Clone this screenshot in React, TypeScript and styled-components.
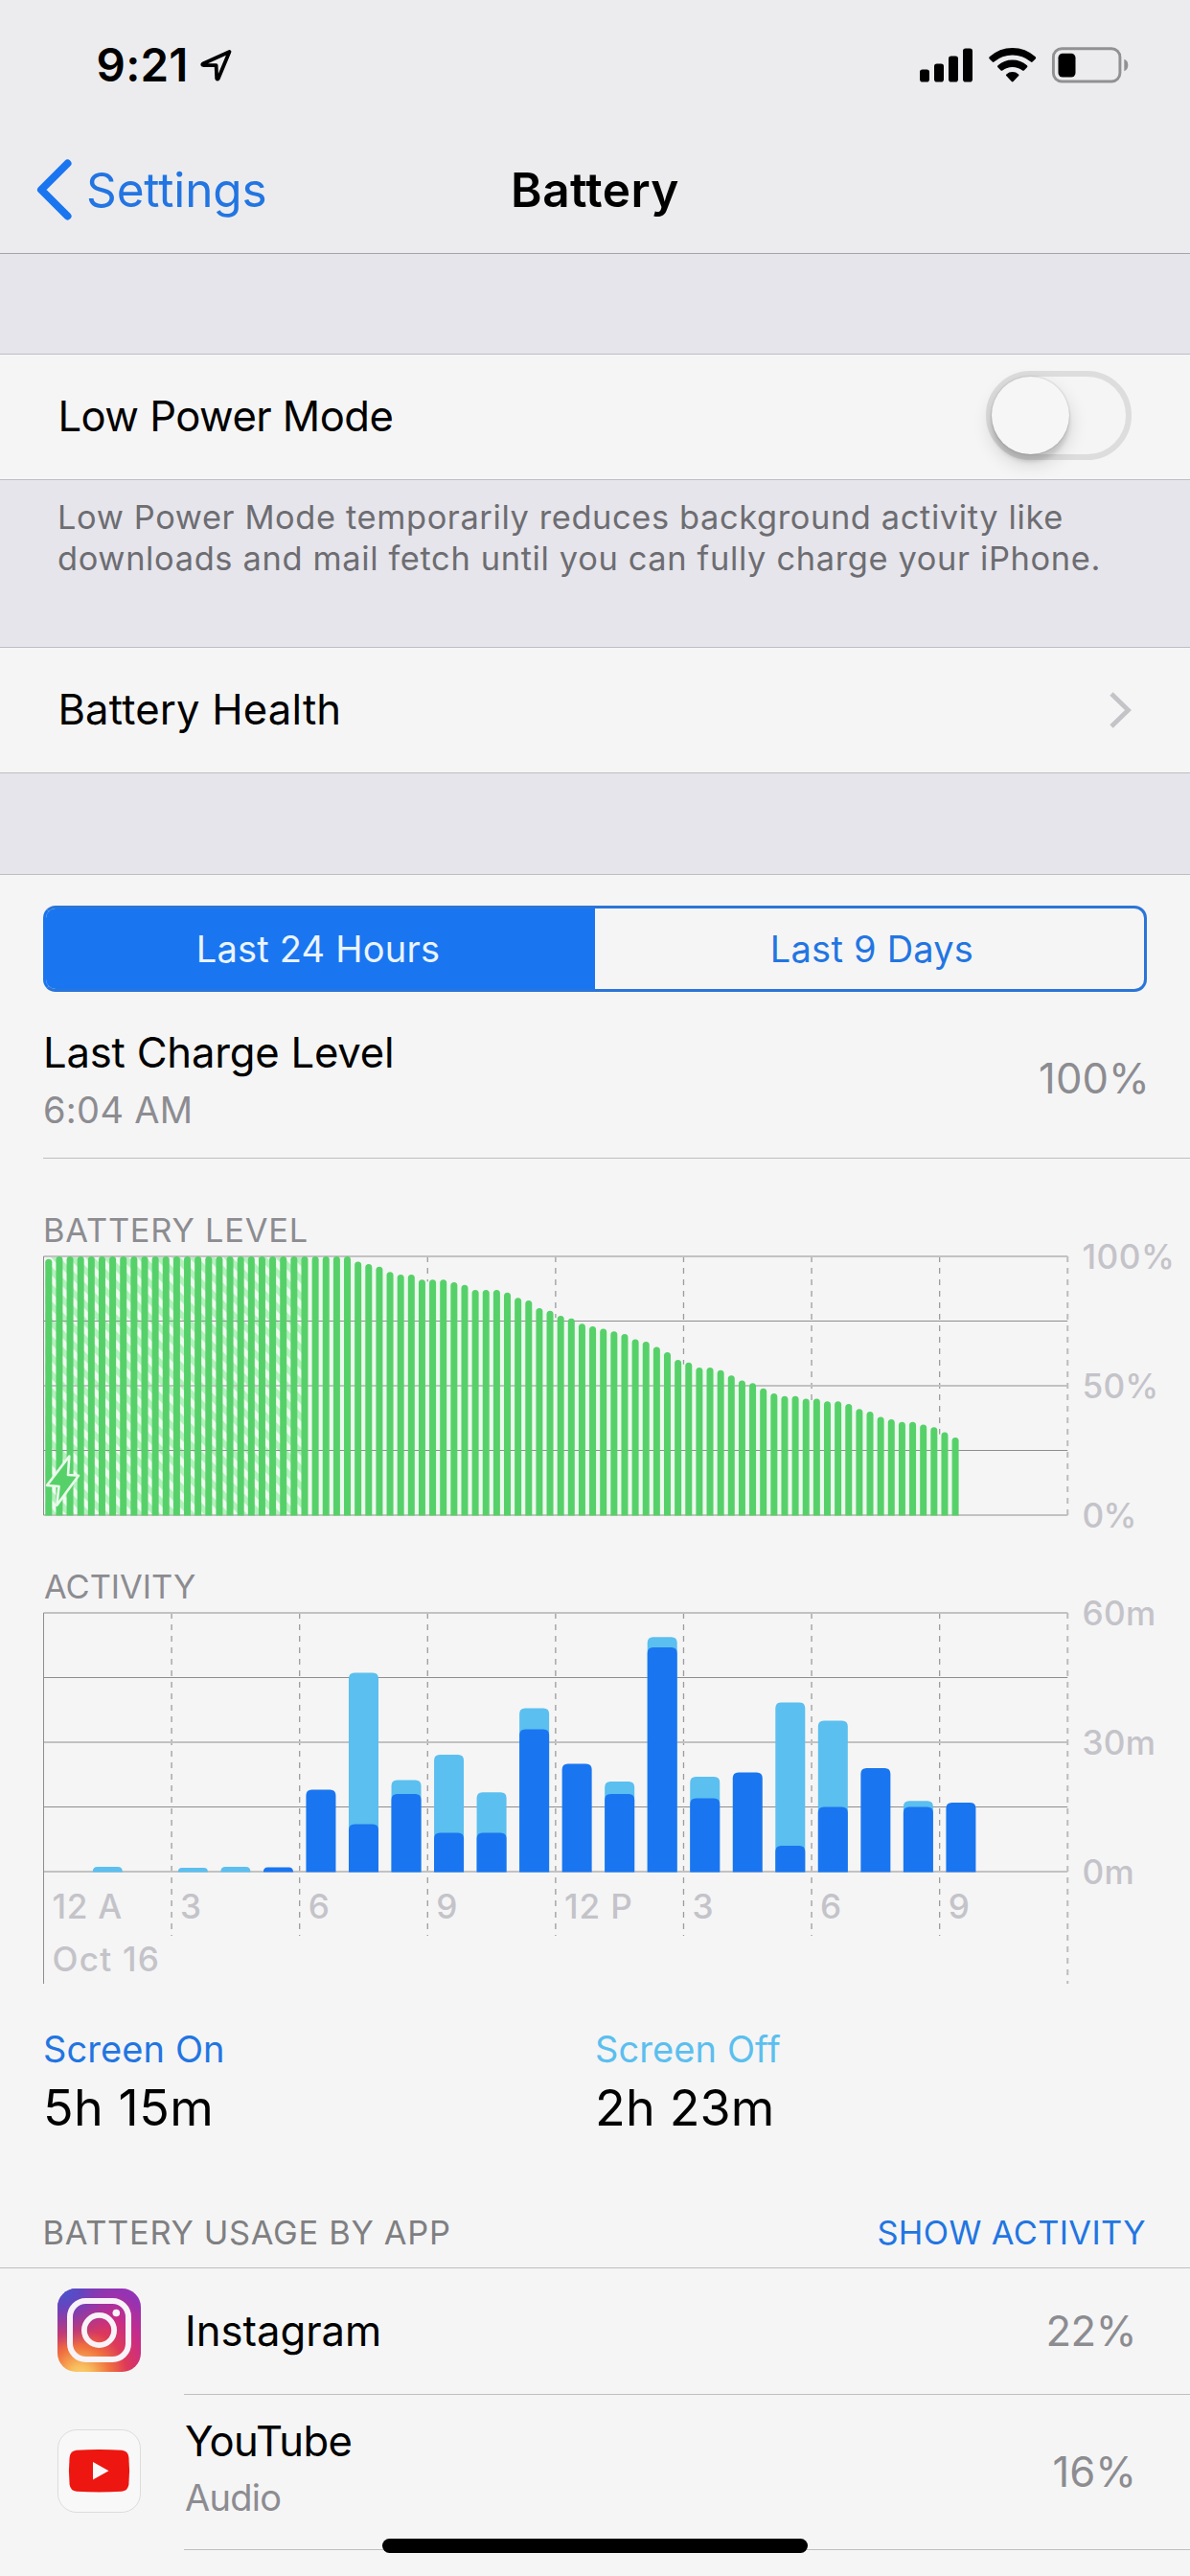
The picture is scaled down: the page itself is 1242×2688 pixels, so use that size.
import React from "react";
import styled, { createGlobalStyle } from "styled-components";

const BLUE = "#1a75f0";
const SKY = "#5bbfef";
const GREEN = "#56d169";
const GRAY = "#8c8c91";
const AXIS = "#c4c3c9";
const HAIRLINE = "#bebdc2";
const FONT = `Inter, Roboto, "Liberation Sans", sans-serif`;

const GlobalStyle = createGlobalStyle`
  * { box-sizing: border-box; }
  html, body { margin: 0; padding: 0; background: #f5f5f5; }
  body { font-family: ${FONT}; color: #000; }
`;

const Screen = styled.main`
  position: relative;
  display: flex;
  flex-direction: column;
  width: 1242px;
  height: 2688px;
  overflow: hidden;
  background: #f5f5f5;
`;

const Text = styled.span<{ $size: number; $line?: number; $track?: number; $color?: string; $weight?: number }>`
  display: block;
  white-space: nowrap;
  font-size: ${(p) => p.$size}px;
  line-height: ${(p) => p.$line ?? 60}px;
  letter-spacing: ${(p) => p.$track ?? 0}px;
  color: ${(p) => p.$color ?? "#000"};
  font-weight: ${(p) => p.$weight ?? 400};
`;

const Header = styled.header`
  height: 265px;
  flex: none;
  background: #ececee;
  border-bottom: 1px solid #a4a4aa;
`;

const StatusBar = styled.div`
  display: flex;
  align-items: center;
  height: 132px;
  padding: 3px 64px 0 100.6px;
`;

const LocationArrow = styled.svg`
  margin-left: 11px;
`;

const StatusIcons = styled.svg`
  margin-left: auto;
`;

const NavBar = styled.nav`
  display: grid;
  grid-template-columns: 1fr auto 1fr;
  align-items: center;
  height: 132px;
`;

const BackButton = styled.div`
  display: flex;
  align-items: center;
  gap: 14px;
  padding-left: 38px;
`;

const Gap = styled.div<{ $height: number }>`
  flex: none;
  height: ${(p) => p.$height}px;
  background: #e6e5eb;
`;

const Cell = styled.section`
  display: flex;
  flex: none;
  align-items: center;
  justify-content: space-between;
  height: 132px;
  padding: 0 61px 0 60.4px;
  border-top: 1px solid ${HAIRLINE};
  border-bottom: 1px solid ${HAIRLINE};
`;

const Footnote = styled.div`
  flex: none;
  height: 174px;
  padding: 18px 0 0 60px;
  background: #e6e5eb;
`;

const Toggle = styled.div`
  width: 152px;
  height: 93px;
  margin-bottom: 3px;
  border: 6px solid #dddddd;
  border-radius: 47px;
`;

const Knob = styled.div`
  width: 81px;
  height: 81px;
  border-radius: 50%;
  background: #f6f6f6;
  box-shadow: 0 9px 20px rgba(0, 0, 0, 0.16), 0 8px 4px rgba(0, 0, 0, 0.11), 0 0 2px rgba(0, 0, 0, 0.25);
`;

const Panel = styled.section`
  display: flex;
  flex-direction: column;
  border-top: 1px solid ${HAIRLINE};
  padding-top: 32px;
`;

const Segmented = styled.div`
  display: grid;
  grid-template-columns: 1fr 1fr;
  height: 90px;
  margin: 0 45px;
  border: 3px solid #2a75d8;
  border-left-color: ${BLUE};
  border-radius: 13px;
  overflow: hidden;
`;

const Segment = styled.div<{ $active?: boolean }>`
  display: flex;
  align-items: center;
  justify-content: center;
  padding: ${(p) => (p.$active ? "0 5px 0 0" : "0 0 0 5px")};
  background: ${(p) => (p.$active ? BLUE : "transparent")};
`;

const ChargeRow = styled.div`
  display: flex;
  align-items: center;
  justify-content: space-between;
  height: 174px;
  margin-left: 45px;
  padding: 8px 42px 0 0;
  border-bottom: 1px solid ${HAIRLINE};
`;

const Stack = styled.div<{ $gap: number; $lift?: number }>`
  display: flex;
  flex-direction: column;
  gap: ${(p) => p.$gap}px;
  padding-bottom: ${(p) => p.$lift ?? 0}px;
`;

const ChartBlock = styled.figure<{ $top: number }>`
  display: flex;
  flex-direction: column;
  margin: ${(p) => p.$top}px 0 0;
`;

const ChartTitle = styled.figcaption<{ $inset: number }>`
  padding-left: ${(p) => p.$inset}px;
`;

const ChartSvg = styled.svg`
  display: block;
  overflow: visible;
  font-family: ${FONT};
`;

const AxisText = styled.text<{ $track: number }>`
  fill: ${AXIS};
  font-size: 35.2px;
  font-weight: 500;
  letter-spacing: ${(p) => p.$track}px;
`;

const Totals = styled.div`
  display: grid;
  grid-template-columns: 576px 576px;
  margin: 41px 45px 0;
`;

const UsageHeader = styled.div`
  display: flex;
  align-items: flex-end;
  justify-content: space-between;
  height: 137px;
  padding: 0 46px 16px 44.5px;
  border-bottom: 1px solid ${HAIRLINE};
`;

const AppRow = styled.div<{ $height: number }>`
  display: flex;
  align-items: center;
  gap: 45px;
  height: ${(p) => p.$height}px;
  padding-left: 60px;
`;

const AppIcon = styled.svg`
  display: block;
  flex: none;
  margin-bottom: 3px;
`;

const AppBody = styled.div`
  display: flex;
  flex: 1;
  align-items: center;
  justify-content: space-between;
  align-self: stretch;
  padding: 0 56px 0 1px;
  border-bottom: 1px solid ${HAIRLINE};
`;

const HomeIndicator = styled.div`
  position: absolute;
  left: 399px;
  top: 2649px;
  width: 444px;
  height: 15px;
  border-radius: 8px;
  background: #000;
`;

const PLOT_X = 45.5;
const PLOT_Y = 7;
const PLOT_W = 1068.75;
const PLOT_H = 270;
const HOUR = PLOT_W / 24;

// One sample per quarter hour, starting at midnight.
const batteryLevels: number[] = [
  99, ...Array<number>(28).fill(100), 98, 97, 96, 94, 93, 93, 91, 91, 91, 90, 89, 87, 87, 87, 86, 84, 83, 80, 79, 77,
  76, 74, 73, 72, 71, 70, 68, 67, 65, 63, 60, 59, 57, 57, 56, 54, 52, 51, 49, 47, 46, 46, 45, 45, 44, 44, 43, 41, 40,
  38, 37, 36, 36, 35, 34, 32, 30,
];

const CHARGING_SAMPLES = 25;

const activity: { hour: number; total: number; on: number }[] = [
  { hour: 1, total: 1.1, on: 0 },
  { hour: 3, total: 0.9, on: 0 },
  { hour: 4, total: 1.1, on: 0 },
  { hour: 5, total: 1, on: 1 },
  { hour: 6, total: 19, on: 19 },
  { hour: 7, total: 46.1, on: 11 },
  { hour: 8, total: 21.2, on: 18 },
  { hour: 9, total: 27.1, on: 9 },
  { hour: 10, total: 18.4, on: 9 },
  { hour: 11, total: 37.9, on: 33 },
  { hour: 12, total: 25, on: 25 },
  { hour: 13, total: 20.9, on: 18 },
  { hour: 14, total: 54.4, on: 52 },
  { hour: 15, total: 22, on: 17 },
  { hour: 16, total: 23, on: 23 },
  { hour: 17, total: 39.2, on: 6 },
  { hour: 18, total: 35, on: 15 },
  { hour: 19, total: 24, on: 24 },
  { hour: 20, total: 16.4, on: 15 },
  { hour: 21, total: 16, on: 16 },
];

const hourLabels = [
  { label: "12 A", track: 0.7 },
  { label: "3", track: 0 },
  { label: "6", track: 0 },
  { label: "9", track: 0 },
  { label: "12 P", track: 0.9 },
  { label: "3", track: 0 },
  { label: "6", track: 0 },
  { label: "9", track: 0 },
];

function roundedTop(x: number, width: number, height: number, radius: number) {
  const r = Math.min(radius, height);
  const top = PLOT_Y + PLOT_H - height;
  const bottom = PLOT_Y + PLOT_H + 0.5;
  return `M${x} ${bottom}V${top + r}Q${x} ${top} ${x + r} ${top}H${x + width - r}Q${x + width} ${top} ${x + width} ${top + r}V${bottom}Z`;
}

function HourLines({ dashEnd, edgeEnd }: { dashEnd: number; edgeEnd: number }) {
  return (
    <g>
      {[1, 2, 3, 4, 5, 6, 7, 8].map((i) => {
        const x = PLOT_X + i * 3 * HOUR;
        const last = i === 8;
        return (
          <line
            key={i}
            x1={x}
            x2={x}
            y1={PLOT_Y}
            y2={last ? edgeEnd : dashEnd}
            stroke={last ? "#bcbcbc" : "#9c9c9e"}
            strokeWidth={last ? 2 : 1.3}
            strokeDasharray="6 6"
          />
        );
      })}
    </g>
  );
}

function LevelLines({ edgeEnd }: { edgeEnd: number }) {
  return (
    <g>
      {[0, 1, 2, 3, 4].map((i) => {
        const heavy = i % 2 === 0;
        const y = PLOT_Y + (i * PLOT_H) / 4;
        return (
          <line
            key={i}
            x1={PLOT_X}
            x2={PLOT_X + PLOT_W}
            y1={y}
            y2={y}
            stroke={heavy ? "#c2c2c2" : "#8e8e90"}
            strokeWidth={heavy ? 2 : 1}
          />
        );
      })}
      <line x1={PLOT_X} x2={PLOT_X} y1={PLOT_Y} y2={edgeEnd} stroke="#8e8e90" strokeWidth={1} />
    </g>
  );
}

function AxisLabels({ labels }: { labels: [string, number][] }) {
  return (
    <>
      {labels.map(([label, track], i) => (
        <AxisText key={label} x={1129.5} y={PLOT_Y + 12.5 + i * 135} $track={track}>
          {label}
        </AxisText>
      ))}
    </>
  );
}

function BatteryChart() {
  const pitch = HOUR / 4;
  return (
    <ChartSvg width="1242" height="332" viewBox="0 0 1242 332">
      <defs>
        <pattern id="hatch" width="18" height="18" patternUnits="userSpaceOnUse">
          <rect width="18" height="18" fill="#b6efbf" />
          <path d="M-2 -11L20 11V20L-2 -2ZM-2 7L20 29V38L-2 16Z" fill="#f0faf1" />
        </pattern>
      </defs>
      <HourLines dashEnd={PLOT_Y + PLOT_H} edgeEnd={PLOT_Y + PLOT_H} />
      <rect
        x={PLOT_X + 2}
        y={PLOT_Y}
        width={CHARGING_SAMPLES * pitch - 5}
        height={PLOT_H}
        fill="url(#hatch)"
      />
      {batteryLevels.slice(CHARGING_SAMPLES).map((level, i) => (
        <rect
          key={i}
          x={PLOT_X + 2 + (i + CHARGING_SAMPLES - 1) * pitch + 6}
          y={PLOT_Y + PLOT_H * (1 - level / 100) + 2}
          width={pitch - 5}
          height={(PLOT_H * level) / 100 - 2}
          fill="#edf8ee"
        />
      ))}
      <LevelLines edgeEnd={PLOT_Y + PLOT_H} />
      {batteryLevels.map((level, i) => (
        <path key={i} d={roundedTop(PLOT_X + 1.8 + i * pitch, 7, (PLOT_H * level) / 100, 3.5)} fill={GREEN} />
      ))}
      <path
        d="M72.3 215.5L71 235L82 235.7L59.3 266.7L61.5 247L49 246Z"
        fill={GREEN}
        stroke="#eafaec"
        strokeWidth="2.6"
        strokeLinejoin="round"
      />
      <AxisLabels
        labels={[
          ["100%", 0.5],
          ["50%", 0.2],
          ["0%", -0.8],
        ]}
      />
    </ChartSvg>
  );
}

function ActivityChart() {
  return (
    <ChartSvg width="1242" height="399" viewBox="0 0 1242 399">
      <HourLines dashEnd={344} edgeEnd={394} />
      <LevelLines edgeEnd={394} />
      {activity.map(({ hour, total, on }) => {
        const x = PLOT_X + (hour + 0.5) * HOUR - 15.5;
        return (
          <g key={hour}>
            {total > on && <path d={roundedTop(x, 31, (PLOT_H * total) / 60, 6)} fill={SKY} />}
            {on > 0 && <path d={roundedTop(x, 31, (PLOT_H * on) / 60, 6)} fill={BLUE} />}
          </g>
        );
      })}
      {hourLabels.map(({ label, track }, i) => (
        <AxisText key={i} x={54.5 + i * 3 * HOUR} y={326} $track={track}>
          {label}
        </AxisText>
      ))}
      <AxisText x={54.5} y={381} $track={1.2}>
        Oct 16
      </AxisText>
      <AxisLabels
        labels={[
          ["60m", 0.3],
          ["30m", 0.3],
          ["0m", 0.3],
        ]}
      />
    </ChartSvg>
  );
}

function InstagramIcon() {
  return (
    <AppIcon width="87" height="87" viewBox="0 0 87 87">
      <defs>
        <radialGradient id="ig-warm" gradientUnits="userSpaceOnUse" cx="24" cy="92" r="98">
          <stop offset="0" stopColor="#fbd27a" />
          <stop offset="0.12" stopColor="#f8bd5c" />
          <stop offset="0.32" stopColor="#f0713f" />
          <stop offset="0.5" stopColor="#de3a58" />
          <stop offset="0.72" stopColor="#c92c86" />
          <stop offset="1" stopColor="#9433b4" />
        </radialGradient>
        <radialGradient id="ig-cool" gradientUnits="userSpaceOnUse" cx="6" cy="0" r="62">
          <stop offset="0" stopColor="#4558cf" />
          <stop offset="0.3" stopColor="#5a48c4" stopOpacity="0.9" />
          <stop offset="1" stopColor="#8c35b4" stopOpacity="0" />
        </radialGradient>
      </defs>
      <rect width="87" height="87" rx="19.5" fill="url(#ig-warm)" />
      <rect width="87" height="87" rx="19.5" fill="url(#ig-cool)" />
      <g fill="none" stroke="#f8f3f8">
        <rect x="13" y="13" width="61" height="61" rx="16.5" strokeWidth="6" />
        <circle cx="43.5" cy="43.5" r="15.6" strokeWidth="5.8" />
      </g>
      <circle cx="61.3" cy="25.5" r="3.8" fill="#f8f3f8" />
    </AppIcon>
  );
}

function YouTubeIcon() {
  return (
    <AppIcon width="87" height="87" viewBox="0 0 87 87">
      <rect x="0.5" y="0.5" width="86" height="86" rx="19.5" fill="#f8f8f8" stroke="#dcdcdd" />
      <path
        d="M12.6 29Q13.5 22.3 20 21.8Q43.5 20.2 67 21.8Q73.5 22.3 74.4 29Q75.8 43.5 74.4 57.5Q73.5 64.2 67 64.8Q43.5 66.4 20 64.8Q13.5 64.2 12.6 57.5Q11.2 43.5 12.6 29Z"
        fill="#ee1610"
      />
      <path d="M37 34L53.5 43.3L37 52.6Z" fill="#f8f8f8" />
    </AppIcon>
  );
}

export default function App() {
  return (
    <Screen>
      <GlobalStyle />
      <Header>
        <StatusBar>
          <Text $size={47.5} $track={0.2} $weight={600}>
            9:21
          </Text>
          <LocationArrow width="36" height="36" viewBox="0 0 36 36">
            <path
              d="M31.5 4L3.8 16.5Q2.5 17.6 4.2 18L17.6 18.2L18.2 31.8Q18.8 33.5 19.8 32Z"
              fill="none"
              stroke="#000"
              strokeWidth="3.8"
              strokeLinejoin="round"
            />
          </LocationArrow>
          <StatusIcons width="218" height="38" viewBox="0 0 218 38">
            <rect x="0" y="23.5" width="10" height="13" rx="2.8" />
            <rect x="15" y="17.5" width="10" height="19" rx="2.8" />
            <rect x="30" y="9.5" width="10" height="27" rx="2.8" />
            <rect x="45" y="1.5" width="10" height="35" rx="2.8" />
            <path d="M72.7 12.5Q71.6 11.3 72.7 10.2Q83 0.9 96.7 0.9T120.7 10.2Q121.8 11.3 120.7 12.5L117.6 15.6Q116.8 16.4 115.9 15.6Q107.5 8.6 96.7 8.6T77.5 15.6Q76.6 16.4 75.8 15.6Z" />
            <path d="M81.4 21.2Q80.4 20.2 81.5 19.2Q88 13.6 96.7 13.6T111.9 19.2Q113 20.2 112 21.2L108.8 24.5Q108 25.2 107.1 24.5Q102.6 20.9 96.7 20.9T86.3 24.5Q85.4 25.2 84.6 24.5Z" />
            <path d="M90.2 30.1Q89.4 29.2 90.4 28.4Q93 26.1 96.7 26.1T103 28.4Q104 29.2 103.2 30.1L97.6 36Q96.7 36.9 95.8 36Z" />
            <rect x="139.4" y="1.7" width="69.5" height="34.3" rx="8.8" fill="none" stroke="#919193" strokeWidth="2.9" />
            <rect x="144.5" y="6.7" width="18" height="24.8" rx="4.6" />
            <path d="M213.3 12.8Q217.3 14.2 217.3 19T213.3 25.2Z" fill="#919193" />
          </StatusIcons>
        </StatusBar>
        <NavBar>
          <BackButton>
            <svg width="38" height="66" viewBox="0 0 38 66">
              <path
                d="M32.5 5.5L5 33L32.5 60.5"
                fill="none"
                stroke={BLUE}
                strokeWidth="8"
                strokeLinecap="round"
                strokeLinejoin="round"
              />
            </svg>
            <Text $size={49.5} $track={-0.13} $color="#2275e2">
              Settings
            </Text>
          </BackButton>
          <Text $size={49.5} $track={0.44} $weight={600}>
            Battery
          </Text>
        </NavBar>
      </Header>

      <Gap $height={104} />
      <Cell>
        <Text $size={43.6} $track={-0.54}>
          Low Power Mode
        </Text>
        <Toggle>
          <Knob />
        </Toggle>
      </Cell>
      <Footnote>
        <Text $size={34.4} $line={42.5} $track={0.62} $color="#6d6d72">
          Low Power Mode temporarily reduces background activity like
        </Text>
        <Text $size={34.4} $line={42.5} $track={0.65} $color="#6d6d72">
          downloads and mail fetch until you can fully charge your iPhone.
        </Text>
      </Footnote>
      <Cell>
        <Text $size={43.6} $track={0.19}>
          Battery Health
        </Text>
        <svg width="24" height="38" viewBox="0 0 24 38">
          <path d="M3 2L20.5 19L3 36" fill="none" stroke="#c3c3c8" strokeWidth="4.8" />
        </svg>
      </Cell>
      <Gap $height={105} />

      <Panel>
        <Segmented>
          <Segment $active>
            <Text $size={38} $track={0.22} $color="#e9f4ff">
              Last 24 Hours
            </Text>
          </Segment>
          <Segment>
            <Text $size={38} $track={0.22} $color="#2275e2">
              Last 9 Days
            </Text>
          </Segment>
        </Segmented>

        <ChargeRow>
          <Stack $gap={4}>
            <Text $size={43.6} $track={-0.2}>
              Last Charge Level
            </Text>
            <Text $size={38} $line={50} $track={0.3} $color={GRAY}>
              6:04 AM
            </Text>
          </Stack>
          <Text $size={43.6} $track={0.1} $color={GRAY}>
            100%
          </Text>
        </ChargeRow>

        <ChartBlock $top={55}>
          <ChartTitle $inset={45}>
            <Text $size={34.4} $line={40} $track={0.79} $color={GRAY}>
              BATTERY LEVEL
            </Text>
          </ChartTitle>
          <BatteryChart />
        </ChartBlock>

        <ChartBlock $top={0}>
          <ChartTitle $inset={46}>
            <Text $size={34.4} $line={40} $track={0} $color={GRAY}>
              ACTIVITY
            </Text>
          </ChartTitle>
          <ActivityChart />
        </ChartBlock>

        <Totals>
          <Stack $gap={10}>
            <Text $size={38} $line={44} $track={0.1} $color="#2275e2">
              Screen On
            </Text>
            <Text $size={52} $track={0.5}>
              5h 15m
            </Text>
          </Stack>
          <Stack $gap={10}>
            <Text $size={38} $line={44} $track={0.1} $color={SKY}>
              Screen Off
            </Text>
            <Text $size={52} $track={0.18}>
              2h 23m
            </Text>
          </Stack>
        </Totals>

        <UsageHeader>
          <Text $size={34.4} $line={40} $track={0.7} $color="#7f7f82">
            BATTERY USAGE BY APP
          </Text>
          <Text $size={34.4} $line={40} $track={0.37} $color="#2275e2">
            SHOW ACTIVITY
          </Text>
        </UsageHeader>

        <AppRow $height={132}>
          <InstagramIcon />
          <AppBody>
            <Text $size={43.6}>Instagram</Text>
            <Text $size={43.6} $track={-0.5} $color={GRAY}>
              22%
            </Text>
          </AppBody>
        </AppRow>
        <AppRow $height={162}>
          <YouTubeIcon />
          <AppBody>
            <Stack $gap={5} $lift={8}>
              <Text $size={43.6} $line={56} $track={-0.65}>
                YouTube
              </Text>
              <Text $size={38} $line={50} $track={-0.71} $color={GRAY}>
                Audio
              </Text>
            </Stack>
            <Text $size={43.6} $track={0} $color={GRAY}>
              16%
            </Text>
          </AppBody>
        </AppRow>
      </Panel>

      <HomeIndicator />
    </Screen>
  );
}
